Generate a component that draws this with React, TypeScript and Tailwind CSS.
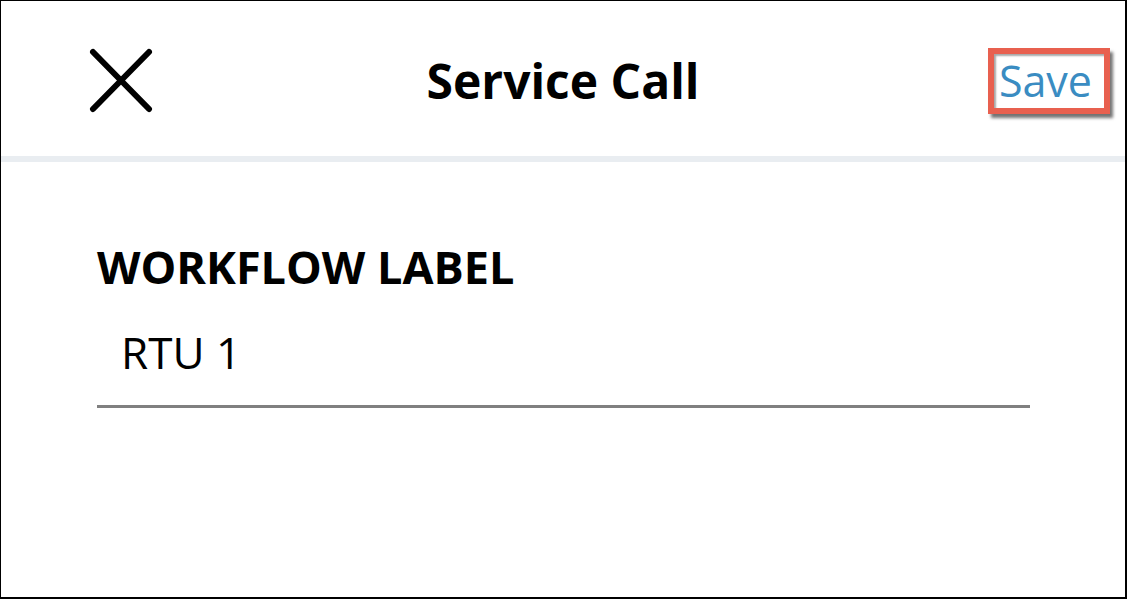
const font = { fontFamily: '"Open Sans", "Liberation Sans", sans-serif' };

function CloseIcon() {
  return (
    <svg width="64" height="65" viewBox="0 0 64 65" fill="none">
      <path d="M4 4 L60 61 M60 4 L4 61" stroke="#000" strokeWidth="6" strokeLinecap="round" />
    </svg>
  );
}

export default function App() {
  return (
    <div
      className="w-[1127px] h-[599px] bg-white border-l border-t border-r-2 border-b-2 border-black flex flex-col"
      style={font}
    >
      <header className="h-[155px] grid grid-cols-[1fr_auto_1fr] items-center pt-[4px]">
        <div className="pl-[88px]">
          <button className="block">
            <CloseIcon />
          </button>
        </div>
        <h1 className="text-[48px] font-bold text-black leading-none">Service Call</h1>
        <div className="flex justify-end pr-[15px]">
          <button className="h-[66px] border-[6px] border-[#e8604f] pl-[5px] pr-[12px] text-[43px] leading-[52px] text-[#3a8cc2] bg-white shadow-[3px_4px_3px_rgba(0,0,0,0.55),inset_2px_2px_2px_rgba(0,0,0,0.35)]">
            Save
          </button>
        </div>
      </header>
      <div className="h-[6px] bg-[#e9edf1]" />
      <main className="pl-[96px] pt-[82px]">
        <label className="block text-[45px] font-bold text-black leading-none">WORKFLOW LABEL</label>
        <div className="w-[933px] border-b-[3px] border-[#808080] mt-[41px] pl-[24px] pb-[31px]">
          <span className="block text-[44px] text-black leading-none">RTU 1</span>
        </div>
      </main>
    </div>
  );
}
